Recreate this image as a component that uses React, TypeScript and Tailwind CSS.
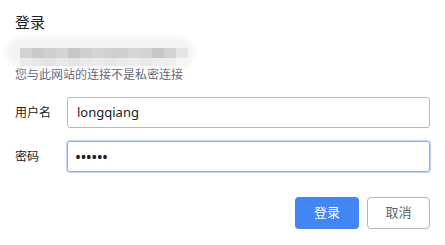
import React from "react";

const row1 = ["#d2d2d4","#cbc9c9","#cfcfd1","#d4d4d6","#c8c7c6","#cfcfd2","#d5d5d7","#d0d0d3","#cfcfd2","#d6d6d8","#d3d3d5","#c9c8c8","#d1d2d4","#e6e6e7"];
const row2 = ["#ebebec","#e6e6e7","#e3e3e5","#e8e8e9","#e4e4e6","#e9e9ea","#ebebec","#e7e7e8","#eaeaeb","#ececed","#e8e8e9","#ededee","#efeff0","#f6f6f6"];

export default function App() {
  return (
    <div
      className="w-[445px] h-[245px] bg-white flex flex-col"
      style={{ fontFamily: '"Noto Sans", "Noto Sans CJK SC", sans-serif' }}
    >
      <div className="pl-[15px] pt-[11px] text-[15px] leading-[22px] text-[#202124]">登录</div>
      <div className="relative h-[30px] mt-[4px] ml-[5px] w-[190px]">
        <div className="absolute inset-0 rounded-full bg-[#f4f4f5] blur-[3px]" />
        <div className="absolute left-[15px] top-[11px] flex flex-col">
          <div className="flex">
            {row1.map((c, i) => (
              <div key={i} className="w-[12px] h-[10px]" style={{ background: c }} />
            ))}
          </div>
          <div className="flex">
            {row2.map((c, i) => (
              <div key={i} className="w-[12px] h-[8px]" style={{ background: c }} />
            ))}
          </div>
        </div>
      </div>
      <div className="pl-[15px] text-[12px] leading-[16px] text-[#5f6578]">您与此网站的连接不是私密连接</div>
      <div className="flex flex-col gap-[13px] mt-[14px] pl-[15px] pr-[15px]">
        <div className="flex items-center">
          <div className="w-[52px] text-[12px] text-[#202124]">用户名</div>
          <div className="flex-1 h-[31px] border border-[#b9b9b9] rounded-[3px] flex items-center px-[9px] text-[13px] text-[#202124]">
            longqiang
          </div>
        </div>
        <div className="flex items-center">
          <div className="w-[52px] text-[12px] text-[#202124]">密码</div>
          <div className="flex-1 h-[31px] border border-[#8fb0ee] shadow-[0_0_0_1px_#c4d6f7] rounded-[3px] flex items-center px-[7px] text-[16px] text-[#202124] tracking-[-0.6px]">
            ••••••
          </div>
        </div>
      </div>
      <div className="flex justify-end gap-[8px] pr-[15px] mt-[25px]">
        <button className="w-[64px] h-[32px] rounded-[4px] bg-[#4285f4] text-white text-[13px]">登录</button>
        <button className="w-[63px] h-[32px] rounded-[4px] border border-[#b5b5b5] bg-white text-[#5f6368] text-[13px]">取消</button>
      </div>
    </div>
  );
}
